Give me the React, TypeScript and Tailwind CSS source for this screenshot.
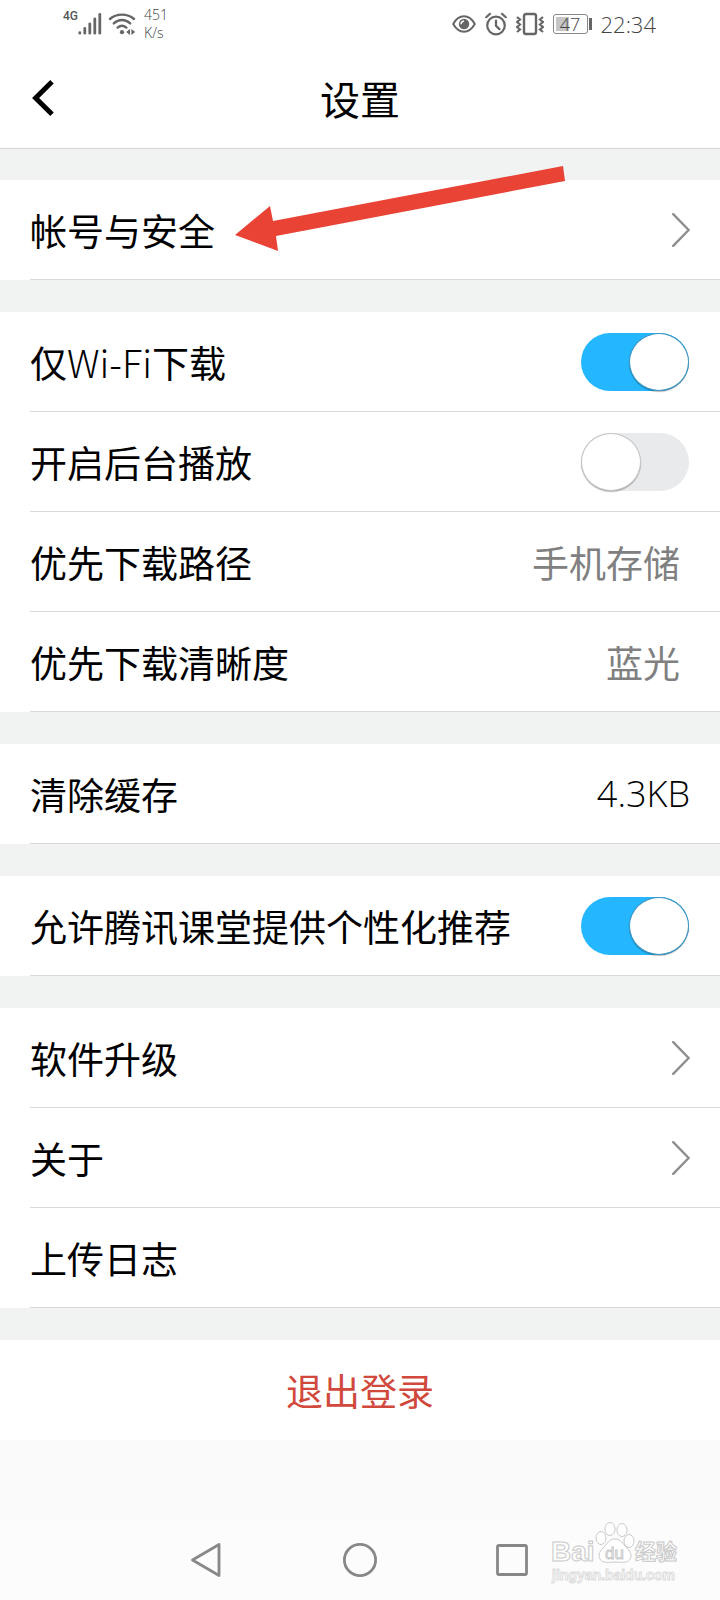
import React, { useId, useState } from "react";

function SignalIcon() {
  return (
    <svg width="24" height="24" viewBox="0 0 24 24" stroke="#666" strokeWidth="2.8" strokeLinecap="round">
      <path d="M1.8 20.6v.6M6.8 16.4v4.8M11.8 11.8v9.4M16.8 7v14.2M21.8 2.4v18.8" />
    </svg>
  );
}

function WifiIcon() {
  return (
    <svg width="28" height="24" viewBox="0 0 28 24" fill="none" stroke="#666" strokeWidth="2.4" strokeLinecap="round">
      <path d="M2 7C8.5 1.2 19.5 1.2 26 7" />
      <path d="M5.8 11.4c5-4.5 11.4-4.5 16.4 0" />
      <path d="M9.6 15.6c2.8-2.4 6-2.4 8.8 0" />
      <circle cx="14" cy="20.2" r="2.1" fill="#666" stroke="none" />
      <path d="M22 17v6l-3.8-3zM23.4 17v6l3.8-3z" fill="#666" stroke="none" />
    </svg>
  );
}

function EyeIcon() {
  return (
    <svg width="24" height="20" viewBox="0 0 24 20" fill="none" stroke="#666" strokeWidth="2">
      <path d="M1.2 10C7-.2 17-.2 22.8 10 17 20.2 7 20.2 1.2 10z" strokeLinejoin="round" />
      <circle cx="12" cy="10" r="5.2" fill="#666" stroke="none" />
      <path d="M9 10.2c0-1.8 1.2-3 3-3.2" stroke="#fff" strokeWidth="1.4" />
    </svg>
  );
}

function AlarmIcon() {
  return (
    <svg width="22" height="24" viewBox="0 0 22 24" fill="none" stroke="#666" strokeWidth="2.2" strokeLinecap="round">
      <circle cx="11" cy="13.5" r="8.8" />
      <path d="M11 8.5v5.2l3.4 3.4M1.2 5.2 5 1.8M20.8 5.2 17 1.8" />
    </svg>
  );
}

function VibrateIcon() {
  return (
    <svg width="28" height="24" viewBox="0 0 28 24" fill="none" stroke="#666" strokeWidth="2.2">
      <rect x="8" y="2" width="12" height="20" rx="2" strokeWidth="2.4" />
      <path d="M1 5l3 2.5-3 2.5 3 2.5-3 2.5 3 2.5-3 2.5M27 5l-3 2.5 3 2.5-3 2.5 3 2.5-3 2.5 3 2.5" />
    </svg>
  );
}

function Battery({ level }: { level: number }) {
  return (
    <div className="flex items-center">
      <div className="relative flex h-[20px] w-[35px] items-center justify-center rounded-[3px] border border-[#888] text-[18px] leading-none">
        <div className="absolute inset-y-[2px] left-[2px] bg-[#c6c6c6]" style={{ width: `${level - 5}%` }} />
        <span className="relative">{level}</span>
      </div>
      <div className="ml-px h-[12px] w-[3px] bg-[#666]" />
    </div>
  );
}

function StatusBar() {
  return (
    <div className="flex h-[48px] items-center justify-between pl-[63px] pr-[64px] font-['Open_Sans',sans-serif] font-light text-[#444]">
      <div className="flex items-center">
        <span className="self-start font-['Roboto',sans-serif] text-[12px] font-medium leading-[20px] text-[#555]">4G</span>
        <SignalIcon />
        <div className="ml-[6px]">
          <WifiIcon />
        </div>
        <div className="ml-[8px] text-[14px] leading-[18px]">
          <div>451</div>
          <div>K/s</div>
        </div>
      </div>
      <div className="flex items-center gap-[9px]">
        <EyeIcon />
        <AlarmIcon />
        <VibrateIcon />
        <Battery level={47} />
        <span className="text-[22px] leading-none">22:34</span>
      </div>
    </div>
  );
}

function Header() {
  return (
    <header className="grid h-[100px] grid-cols-[80px_1fr_80px] items-center">
      <button aria-label="返回" className="flex h-full items-center pl-[32px]">
        <svg width="22" height="36" viewBox="0 0 22 36" fill="none" stroke="#000" strokeWidth="5">
          <path d="M20 1.8 3.6 18 20 34.2" />
        </svg>
      </button>
      <h1 className="text-center text-[40px] leading-[48px]">设置</h1>
    </header>
  );
}

function ChevronRight() {
  return (
    <svg width="18" height="34" viewBox="0 0 18 34" fill="none" stroke="#8e8e8e" strokeWidth="2.4" strokeLinecap="round">
      <path d="M1.2 1.2 16.6 17 1.2 32.8" />
    </svg>
  );
}

const rowClass =
  "flex h-[100px] w-full items-center justify-between border-b border-[#d8d8d8] pr-[30px] text-left";

function LinkRow({ label, arrow = true }: { label: string; arrow?: boolean }) {
  return (
    <button className={rowClass}>
      <span>{label}</span>
      {arrow && <ChevronRight />}
    </button>
  );
}

function ValueRow({ label, value }: { label: string; value: string }) {
  return (
    <button className={rowClass}>
      <span>{label}</span>
      <span className="pr-[10px] text-[#808080]">{value}</span>
    </button>
  );
}

function SwitchRow({ label, initial }: { label: React.ReactNode; initial: boolean }) {
  const id = useId();
  const [on, setOn] = useState(initial);

  return (
    <div className={rowClass}>
      <label htmlFor={id}>{label}</label>
      <input
        id={id}
        type="checkbox"
        role="switch"
        checked={on}
        onChange={(e) => setOn(e.target.checked)}
        className="mr-px flex h-[58px] w-[108px] shrink-0 appearance-none rounded-full bg-[#e9eaec] before:h-[58px] before:w-[60px] before:rounded-[50%] before:border before:border-[#c4c6c8] before:bg-white before:shadow-[0_1px_1px_rgba(0,0,0,0.3)] before:content-[''] checked:justify-end checked:bg-[#24b7ff] checked:before:border-[#3c94c0]"
      />
    </div>
  );
}

function Section({ children }: { children: React.ReactNode }) {
  return <section className="relative bg-white pl-[30px]">{children}</section>;
}

function PointerArrow() {
  return (
    <svg
      className="pointer-events-none absolute -top-[20px] left-[232px]"
      width="340"
      height="100"
      viewBox="0 0 340 100"
      fill="#e94335"
      aria-hidden="true"
    >
      <path d="M3 75 38 46l3 15L331 6l2 15L44 76l2 15z" />
    </svg>
  );
}

function NavBar() {
  return (
    <nav className="flex h-[80px] items-center justify-between bg-[#fcfcfc] px-[190px]">
      <button aria-label="后退">
        <svg width="34" height="36" viewBox="0 0 34 36" fill="none" stroke="#888" strokeWidth="2.8" strokeLinejoin="round">
          <path d="M2.5 18 29 2.5v31z" />
        </svg>
      </button>
      <button aria-label="主页">
        <svg width="36" height="36" viewBox="0 0 36 36" fill="none" stroke="#888" strokeWidth="2.8">
          <circle cx="18" cy="18" r="15.6" />
        </svg>
      </button>
      <button aria-label="最近任务">
        <svg width="34" height="32" viewBox="0 0 34 32" fill="none" stroke="#888" strokeWidth="2.8">
          <rect x="1.5" y="1.5" width="29" height="29" rx="1.5" />
        </svg>
      </button>
    </nav>
  );
}

function Watermark() {
  return (
    <svg
      className="pointer-events-none absolute bottom-[10px] right-[34px]"
      width="136"
      height="70"
      viewBox="0 0 136 70"
      fill="#fff"
      stroke="#c9c9c9"
      strokeWidth="1"
    >
      <g className="font-['Liberation_Sans','Noto_Sans_CJK_SC',sans-serif] font-bold">
        <text x="1" y="41" fontSize="28">Bai</text>
        <text x="85" y="39" fontSize="21">经验</text>
      </g>
      <ellipse cx="51" cy="18" rx="5" ry="6.5" />
      <ellipse cx="60" cy="9" rx="5" ry="6.5" />
      <ellipse cx="72" cy="10" rx="5" ry="6.5" />
      <ellipse cx="79" cy="21" rx="5" ry="6.5" />
      <path d="M65 19c6 0 8 5 12 9s5 8 3 11c-3 5-9 3-15 3s-12 2-15-3c-2-3-1-7 3-11s6-9 12-9z" />
      <text x="55" y="39" fontSize="17" className="font-['Liberation_Sans',sans-serif]">
        du
      </text>
      <text
        x="2"
        y="60"
        fontSize="14"
        stroke="#dcdcdc"
        className="font-['Liberation_Sans',sans-serif] font-bold"
      >
        jingyan.baidu.com
      </text>
    </svg>
  );
}

export default function App() {
  return (
    <div className="relative flex min-h-screen flex-col bg-[#fafafa] font-['Noto_Sans_CJK_SC',sans-serif] text-[37px] leading-[54px] text-black">
      <div className="bg-white">
        <StatusBar />
        <Header />
      </div>

      <main className="flex flex-col gap-[32px] bg-[#f1f3f3]">
        <div className="-mb-[32px] h-[32px] border-t border-[#d4d6d6]" />
        <Section>
          <LinkRow label="帐号与安全" />
          <PointerArrow />
        </Section>

        <Section>
          <SwitchRow
            label={<>仅<span className="text-[38px] font-light">Wi-Fi</span>下载</>}
            initial={true}
          />
          <SwitchRow label="开启后台播放" initial={false} />
          <ValueRow label="优先下载路径" value="手机存储" />
          <ValueRow label="优先下载清晰度" value="蓝光" />
        </Section>

        <Section>
          <button className={rowClass}>
            <span>清除缓存</span>
            <span className="font-['Open_Sans',sans-serif] text-[36px] font-light">4.3KB</span>
          </button>
        </Section>

        <Section>
          <SwitchRow label="允许腾讯课堂提供个性化推荐" initial={true} />
        </Section>

        <Section>
          <LinkRow label="软件升级" />
          <LinkRow label="关于" />
          <LinkRow label="上传日志" arrow={false} />
        </Section>

        <button className="h-[100px] bg-white text-center text-[#d0493c]">退出登录</button>
      </main>

      <div className="min-h-[80px] flex-1" />
      <NavBar />
      <Watermark />
    </div>
  );
}
